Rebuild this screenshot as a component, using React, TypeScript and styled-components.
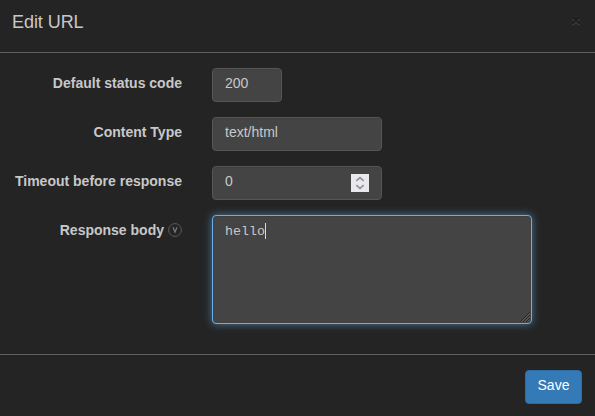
import React from "react";
import styled, { createGlobalStyle } from "styled-components";

const GlobalStyle = createGlobalStyle`
  *, *::before, *::after { box-sizing: border-box; }
  body {
    margin: 0;
    background: #242424;
    color: #c8c8c8;
    font: 14px/20px "Liberation Sans", Arial, sans-serif;
    overflow: hidden;
  }
`;

const Dialog = styled.div`
  display: flex;
  flex-direction: column;
  height: 416px;
  background: #242424;
  border-bottom: 1px solid #2a2024;
`;

const Header = styled.header`
  display: flex;
  justify-content: space-between;
  height: 53px;
  padding: 9px 14px 0 12px;
  border-bottom: 1px solid #606060;
`;

const Title = styled.h4`
  margin: 0;
  font-size: 18px;
  font-weight: 400;
  line-height: 26px;
  letter-spacing: -0.06px;
`;

const CloseButton = styled.button`
  display: flex;
  width: 10px;
  height: 10px;
  margin-top: 7px;
  padding: 0;
  border: 0;
  background: none;
`;

const Form = styled.form`
  display: flex;
  flex-direction: column;
  gap: 15px;
  height: 301px;
  padding-top: 15px;
`;

const Row = styled.div`
  display: grid;
  grid-template-columns: 182px 1fr;
  column-gap: 30px;
  align-items: start;
`;

const Label = styled.label`
  display: flex;
  justify-content: flex-end;
  gap: 4px;
  padding-top: 5px;
  font-weight: 700;
  white-space: nowrap;
`;

const HelpIcon = styled.svg`
  display: block;
  margin-top: 3px;
`;

const Field = styled.div<{ $width: number }>`
  display: flex;
  justify-content: space-between;
  width: ${(p) => p.$width}px;
  height: 34px;
  padding: 0 12px;
  border: 1px solid #565656;
  border-radius: 4px;
  background: #444;
  box-shadow: inset 0 1px 1px rgba(0, 0, 0, 0.075);
`;

const Input = styled.input`
  min-width: 0;
  width: 100%;
  height: 20px;
  margin-top: 4px;
  padding: 0;
  border: 0;
  outline: 0;
  background: none;
  color: #c8c8c8;
  font: inherit;
`;

const Spinner = styled.svg`
  flex: none;
  margin-top: 7px;
  background: #e9e9ed;
`;

const BodyEditor = styled.div`
  display: flex;
  align-items: flex-start;
  justify-content: space-between;
  width: 320px;
  height: 109px;
  padding: 6px 0 0 12px;
  border: 1px solid #66afe9;
  border-radius: 4px;
  background: #444;
  box-shadow: inset 0 1px 1px rgba(0, 0, 0, 0.075), 0 0 8px rgba(102, 175, 233, 0.6);
  font: 13.33px/20px "Liberation Mono", monospace;
`;

const Caret = styled.span`
  display: inline-block;
  width: 1px;
  height: 16px;
  vertical-align: -4px;
  background: #d8d8d8;
`;

const ResizeGrip = styled.svg`
  align-self: flex-end;
`;

const Footer = styled.footer`
  display: flex;
  flex: 1;
  align-items: flex-start;
  justify-content: flex-end;
  padding: 15px 13px 0;
  border-top: 1px solid #606060;
`;

const SaveButton = styled.button`
  width: 57px;
  height: 34px;
  padding: 0 0 4px;
  border: 1px solid #2e6da4;
  border-radius: 4px;
  background: #337ab7;
  color: #fff;
  font: 14px/20px "Liberation Sans", Arial, sans-serif;
`;

export default function App() {
  return (
    <>
      <GlobalStyle />
      <Dialog role="dialog" aria-label="Edit URL">
        <Header>
          <Title>Edit URL</Title>
          <CloseButton aria-label="Close">
            <svg width="10" height="10" viewBox="0 0 10 10" fill="none">
              <path d="M1.5 2.8L8.5 9.2M8.5 2.8L1.5 9.2" stroke="#3d3d3d" strokeWidth="1.6" />
              <path d="M1.8 1.5L8.2 7.5M8.2 1.5L1.8 7.5" stroke="#1d1d1d" strokeWidth="1.7" />
            </svg>
          </CloseButton>
        </Header>
        <Form>
          <Row>
            <Label htmlFor="status">Default status code</Label>
            <Field $width={70}><Input id="status" defaultValue="200" /></Field>
          </Row>
          <Row>
            <Label htmlFor="type">Content Type</Label>
            <Field $width={170}><Input id="type" defaultValue="text/html" /></Field>
          </Row>
          <Row>
            <Label htmlFor="timeout">Timeout before response</Label>
            <Field $width={170}>
              <Input id="timeout" defaultValue="0" />
              <Spinner width="18" height="18" viewBox="0 0 18 18" fill="none">
                <path d="M5.3 6.8L9 3.7L12.7 6.8M5.3 11.2L9 14.3L12.7 11.2" stroke="#8f8f9d" strokeWidth="1.7" />
              </Spinner>
            </Field>
          </Row>
          <Row>
            <Label>
              Response body
              <HelpIcon width="14" height="14" viewBox="0 0 14 14" fill="none">
                <circle cx="7" cy="7" r="6.4" stroke="#5c5c5c" />
                <path d="M5 4.3L7 9L9 4.3" stroke="#777" strokeWidth="1.3" />
              </HelpIcon>
            </Label>
            <BodyEditor>
              <span>hello<Caret /></span>
              <ResizeGrip width="12" height="12" viewBox="0 0 12 12">
                <path d="M1 11L11 1M4 11L11 4M7 11L11 7M10 11L11 10" stroke="#202020" strokeWidth=".8" />
                <path d="M2.3 11L11 2.3M5.3 11L11 5.3M8.3 11L11 8.3" stroke="#757575" strokeWidth=".6" />
              </ResizeGrip>
            </BodyEditor>
          </Row>
        </Form>
        <Footer><SaveButton>Save</SaveButton></Footer>
      </Dialog>
    </>
  );
}
